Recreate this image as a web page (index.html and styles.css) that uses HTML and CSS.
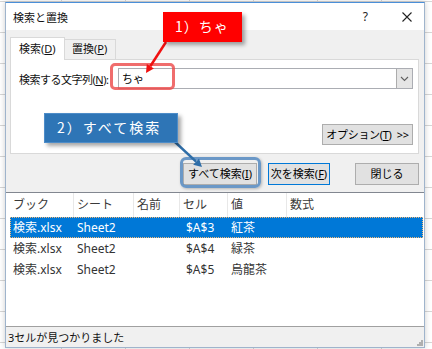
FILE: index.html
```html
<!DOCTYPE html>
<html lang="ja">
<head>
  <meta charset="UTF-8">
  <title>検索と置換</title>
  <link rel="stylesheet" href="styles.css">
</head>
<body>
  <div class="screen">
    <div class="dialog">
      <div class="titlebar">
        <span class="title">検索と置換</span>
        <span class="help">?</span>
        <svg class="close" width="10" height="10" viewBox="0 0 10 10">
          <path d="M0.5 0.5 L9.5 9.5 M9.5 0.5 L0.5 9.5" stroke="#222" stroke-width="1.1" fill="none"/>
        </svg>
      </div>

      <div class="dialog-body">
        <div class="tabs">
          <div class="tab active">検索(<u>D</u>)</div>
          <div class="tab">置換(<u>P</u>)</div>
        </div>
        <div class="panel">
          <div class="find-row">
            <label class="find-label">検索する文字列(<u>N</u>):</label>
            <div class="combo">
              <span class="combo-text">ちゃ</span>
              <span class="combo-btn">
                <svg width="9" height="6" viewBox="0 0 9 6">
                  <path d="M1 1 L4.5 4.5 L8 1" stroke="#606060" stroke-width="1.1" fill="none"/>
                </svg>
              </span>
            </div>
          </div>
          <div class="panel-foot">
            <button class="btn btn-options">オプション(<u>T</u>)&nbsp; &gt;&gt;</button>
          </div>
        </div>
        <div class="actions">
          <button class="btn btn-all">すべて検索(<u>I</u>)</button>
          <button class="btn btn-next">次を検索(<u>F</u>)</button>
          <button class="btn btn-close">閉じる</button>
        </div>
      </div>

      <div class="results">
        <div class="list-head">
          <div class="cell">ブック</div>
          <div class="cell">シート</div>
          <div class="cell">名前</div>
          <div class="cell">セル</div>
          <div class="cell">値</div>
          <div class="cell">数式</div>
        </div>
        <div class="row selected">
          <div>検索.xlsx</div><div>Sheet2</div><div></div><div>$A$3</div><div>紅茶</div><div></div>
        </div>
        <div class="row">
          <div>検索.xlsx</div><div>Sheet2</div><div></div><div>$A$4</div><div>緑茶</div><div></div>
        </div>
        <div class="row">
          <div>検索.xlsx</div><div>Sheet2</div><div></div><div>$A$5</div><div>烏龍茶</div><div></div>
        </div>
      </div>

      <div class="status">
        <span>3セルが見つかりました</span>
        <svg class="grip" width="7" height="7" viewBox="0 0 7 7">
          <rect x="5" y="1" width="2" height="2" fill="#b0b0b0"/>
          <rect x="3" y="3" width="2" height="2" fill="#b0b0b0"/>
          <rect x="5" y="3" width="2" height="2" fill="#b0b0b0"/>
          <rect x="1" y="5" width="2" height="2" fill="#b0b0b0"/>
          <rect x="3" y="5" width="2" height="2" fill="#b0b0b0"/>
          <rect x="5" y="5" width="2" height="2" fill="#b0b0b0"/>
        </svg>
      </div>
    </div>

    <!-- annotations drawn over the dialog -->
    <div class="mark mark-red"></div>
    <div class="mark mark-blue"></div>
    <svg class="arrows" width="432" height="349" viewBox="0 0 432 349">
      <line x1="166" y1="42" x2="150.3" y2="66.3" stroke="#f01010" stroke-width="2.5"/>
      <polygon points="146,73 153.9,68.6 146.8,64" fill="#f01010"/>
      <line x1="175" y1="142" x2="196.1" y2="161.6" stroke="#2f6ea8" stroke-width="2.5"/>
      <polygon points="202,167 193.2,164.7 199,158.5" fill="#2f6ea8"/>
    </svg>
    <div class="callout callout-red">1）ちゃ</div>
    <div class="callout callout-blue">2）すべて検索</div>
  </div>
</body>
</html>
```

FILE: styles.css
```css
* {
  margin: 0;
  padding: 0;
  box-sizing: border-box;
}

body {
  width: 432px;
  height: 349px;
  overflow: hidden;
  font-family: "Noto Sans", "Noto Sans CJK JP", sans-serif;
  font-size: 11px;
  color: #000;
  background-color: #fff;
  background-image:
    linear-gradient(to right, #d6d6d6 1px, transparent 1px),
    linear-gradient(to bottom, #d6d6d6 1px, transparent 1px);
  background-size: 64px 31px;
  background-position: -3px 1px;
}

.screen {
  position: relative;
  width: 432px;
  height: 349px;
  padding: 2px 0 0 5px;
}

.dialog {
  width: 420px;
  height: 346px;
  display: flex;
  flex-direction: column;
  background: #f0f0f0;
  border: 1px solid #9fb4cc;
  border-top-color: #4a8fd9;
  box-shadow: 0 0 6px rgba(0, 0, 0, 0.2);
}

/* title bar */
.titlebar {
  height: 27px;
  flex: 0 0 27px;
  display: flex;
  align-items: center;
  background: #fff;
  padding-left: 7px;
}

.title {
  font-size: 11px;
  color: #111;
}

.help {
  margin-left: auto;
  margin-right: 34px;
  font-size: 12px;
  color: #222;
}

.close {
  margin-right: 12px;
}

/* body with tabs and buttons */
.dialog-body {
  height: 162px;
  flex: 0 0 162px;
  padding: 7px 5px 7px 4px;
  display: flex;
  flex-direction: column;
}

.tabs {
  display: flex;
  height: 23px;
  margin-bottom: -1px;
  position: relative;
  z-index: 1;
}

.tab {
  height: 20px;
  width: 51px;
  margin-top: 2px;
  padding-left: 7px;
  line-height: 18px;
  background: #f0f0f0;
  border: 1px solid #d9d9d9;
  border-left: none;
  border-bottom: none;
  color: #111;
}

.tab.active {
  height: 23px;
  width: 55px;
  margin-top: 0;
  padding-left: 8px;
  line-height: 21px;
  background: #fff;
  border-left: 1px solid #d9d9d9;
}

.panel {
  height: 95px;
  background: #fff;
  border: 1px solid #d9d9d9;
  padding: 8px 5px 8px 8px;
  display: flex;
  flex-direction: column;
  justify-content: space-between;
}

.find-row {
  display: flex;
  align-items: center;
  height: 21px;
}

.find-label {
  flex: 0 0 99px;
  white-space: nowrap;
  letter-spacing: -0.5px;
  color: #111;
}

.combo {
  flex: 1;
  height: 21px;
  display: flex;
  border: 1px solid #abadb3;
  background: #fff;
}

.combo-text {
  flex: 1;
  padding-left: 3px;
  line-height: 19px;
  font-size: 11px;
  color: #000;
}

.combo-btn {
  width: 16px;
  display: flex;
  align-items: center;
  justify-content: center;
  background: #e5e5e5;
  border-left: 1px solid #acacac;
}

.panel-foot {
  display: flex;
  justify-content: flex-end;
}

.btn {
  height: 22px;
  font-family: "Noto Sans", "Noto Sans CJK JP", sans-serif;
  font-size: 11px;
  color: #000;
  background: #e1e1e1;
  border: 1px solid #adadad;
  padding: 0;
  line-height: 20px;
}

.btn-options {
  width: 91px;
  height: 21px;
  line-height: 19px;
  letter-spacing: -0.3px;
}

.actions {
  display: flex;
  justify-content: flex-end;
  margin-top: 9px;
}

.btn-all {
  width: 74px;
  margin-right: 11px;
}

.btn-next {
  width: 62px;
  margin-right: 25px;
  border-color: #0078d7;
}

.btn-close {
  width: 64px;
}

/* result list */
.results {
  flex: 1;
  background: #fff;
  border-top: 1px solid #828790;
  padding: 0 1px 0 4px;
  font-size: 12px;
}

.list-head,
.row {
  display: grid;
  grid-template-columns: 64px 60px 46px 48px 59px 1fr;
}

.list-head {
  height: 24px;
  line-height: 23px;
  color: #3a3a3a;
}

.list-head .cell {
  padding-left: 3px;
  border-right: 1px solid #e8e8e8;
}

.list-head .cell:last-child {
  border-right: none;
}

.row {
  height: 21px;
  line-height: 19px;
  color: #333;
  border: 1px dotted transparent;
}

.row div {
  padding-left: 2px;
  white-space: nowrap;
}

.row div:nth-child(4) {
  padding-left: 5px;
}

.row.selected {
  background: #0078d7;
  color: #fff;
  border-color: #f2b877;
}

.status {
  height: 21px;
  flex: 0 0 21px;
  display: flex;
  align-items: flex-end;
  justify-content: space-between;
  border-top: 1px solid #a0a0a0;
  padding: 0 1px 1px 2px;
  background: #f0f0f0;
  font-size: 11px;
  color: #111;
}

.status span {
  align-self: center;
}

/* annotations */
.mark {
  position: absolute;
  box-sizing: border-box;
}

.mark-red {
  left: 110px;
  top: 63px;
  width: 65px;
  height: 27px;
  border: 3px solid rgba(236, 72, 72, 0.8);
  border-radius: 5px;
}

.mark-blue {
  left: 180px;
  top: 157px;
  width: 81px;
  height: 31px;
  border: 3px solid rgba(84, 136, 192, 0.85);
  border-radius: 6px;
  box-shadow: 1px 1px 3px rgba(0, 0, 0, 0.25);
}

.arrows {
  position: absolute;
  left: 0;
  top: 0;
  pointer-events: none;
}

.callout {
  position: absolute;
  height: 30px;
  padding-left: 12px;
  line-height: 29px;
  font-family: "Noto Sans CJK JP", sans-serif;
  font-size: 14px;
  letter-spacing: 1px;
  color: #fff;
  box-shadow: 3px 3px 4px rgba(0, 0, 0, 0.35);
}

.callout-red {
  left: 163px;
  top: 12px;
  width: 79px;
  background: #ff0000;
}

.callout-blue {
  left: 44px;
  top: 113px;
  width: 134px;
  background: #2e75b6;
  border: 1px solid #4d8cc8;
  line-height: 27px;
  letter-spacing: 2px;
}
```
